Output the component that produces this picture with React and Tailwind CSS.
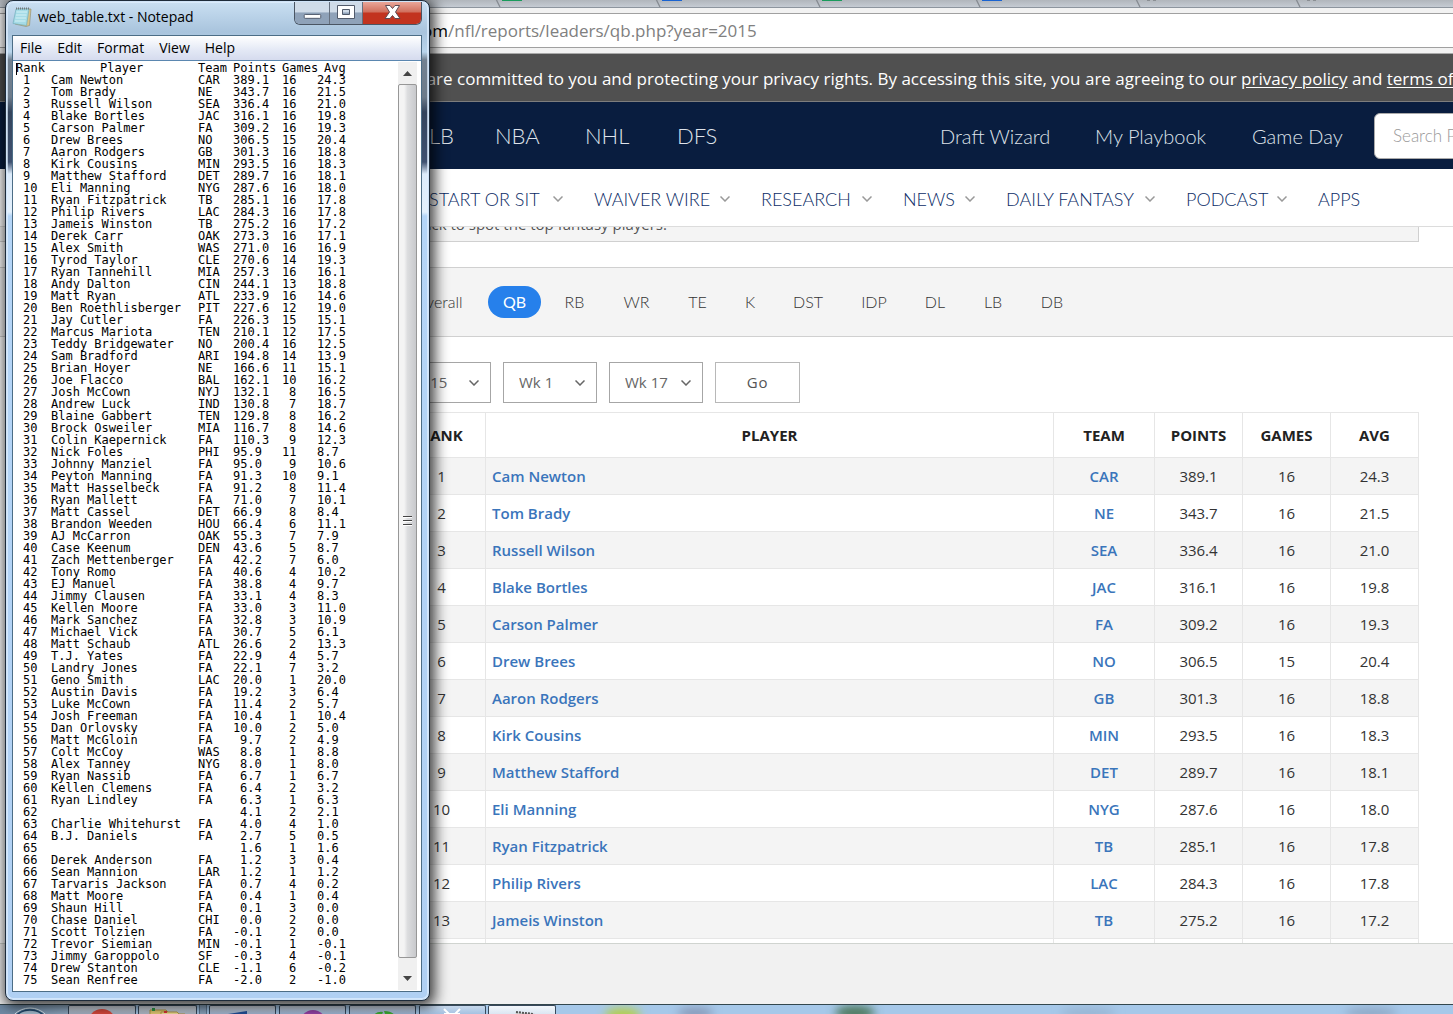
import React from "react";

const players = [
  ["1", "Cam Newton", "CAR", "389.1", "16", "24.3"],
  ["2", "Tom Brady", "NE", "343.7", "16", "21.5"],
  ["3", "Russell Wilson", "SEA", "336.4", "16", "21.0"],
  ["4", "Blake Bortles", "JAC", "316.1", "16", "19.8"],
  ["5", "Carson Palmer", "FA", "309.2", "16", "19.3"],
  ["6", "Drew Brees", "NO", "306.5", "15", "20.4"],
  ["7", "Aaron Rodgers", "GB", "301.3", "16", "18.8"],
  ["8", "Kirk Cousins", "MIN", "293.5", "16", "18.3"],
  ["9", "Matthew Stafford", "DET", "289.7", "16", "18.1"],
  ["10", "Eli Manning", "NYG", "287.6", "16", "18.0"],
  ["11", "Ryan Fitzpatrick", "TB", "285.1", "16", "17.8"],
  ["12", "Philip Rivers", "LAC", "284.3", "16", "17.8"],
  ["13", "Jameis Winston", "TB", "275.2", "16", "17.2"],
  ["14", "Derek Carr", "OAK", "273.3", "16", "17.1"],
  ["15", "Alex Smith", "WAS", "271.0", "16", "16.9"],
  ["16", "Tyrod Taylor", "CLE", "270.6", "14", "19.3"],
  ["17", "Ryan Tannehill", "MIA", "257.3", "16", "16.1"],
  ["18", "Andy Dalton", "CIN", "244.1", "13", "18.8"],
  ["19", "Matt Ryan", "ATL", "233.9", "16", "14.6"],
  ["20", "Ben Roethlisberger", "PIT", "227.6", "12", "19.0"],
  ["21", "Jay Cutler", "FA", "226.3", "15", "15.1"],
  ["22", "Marcus Mariota", "TEN", "210.1", "12", "17.5"],
  ["23", "Teddy Bridgewater", "NO", "200.4", "16", "12.5"],
  ["24", "Sam Bradford", "ARI", "194.8", "14", "13.9"],
  ["25", "Brian Hoyer", "NE", "166.6", "11", "15.1"],
  ["26", "Joe Flacco", "BAL", "162.1", "10", "16.2"],
  ["27", "Josh McCown", "NYJ", "132.1", "8", "16.5"],
  ["28", "Andrew Luck", "IND", "130.8", "7", "18.7"],
  ["29", "Blaine Gabbert", "TEN", "129.8", "8", "16.2"],
  ["30", "Brock Osweiler", "MIA", "116.7", "8", "14.6"],
  ["31", "Colin Kaepernick", "FA", "110.3", "9", "12.3"],
  ["32", "Nick Foles", "PHI", "95.9", "11", "8.7"],
  ["33", "Johnny Manziel", "FA", "95.0", "9", "10.6"],
  ["34", "Peyton Manning", "FA", "91.3", "10", "9.1"],
  ["35", "Matt Hasselbeck", "FA", "91.2", "8", "11.4"],
  ["36", "Ryan Mallett", "FA", "71.0", "7", "10.1"],
  ["37", "Matt Cassel", "DET", "66.9", "8", "8.4"],
  ["38", "Brandon Weeden", "HOU", "66.4", "6", "11.1"],
  ["39", "AJ McCarron", "OAK", "55.3", "7", "7.9"],
  ["40", "Case Keenum", "DEN", "43.6", "5", "8.7"],
  ["41", "Zach Mettenberger", "FA", "42.2", "7", "6.0"],
  ["42", "Tony Romo", "FA", "40.6", "4", "10.2"],
  ["43", "EJ Manuel", "FA", "38.8", "4", "9.7"],
  ["44", "Jimmy Clausen", "FA", "33.1", "4", "8.3"],
  ["45", "Kellen Moore", "FA", "33.0", "3", "11.0"],
  ["46", "Mark Sanchez", "FA", "32.8", "3", "10.9"],
  ["47", "Michael Vick", "FA", "30.7", "5", "6.1"],
  ["48", "Matt Schaub", "ATL", "26.6", "2", "13.3"],
  ["49", "T.J. Yates", "FA", "22.9", "4", "5.7"],
  ["50", "Landry Jones", "FA", "22.1", "7", "3.2"],
  ["51", "Geno Smith", "LAC", "20.0", "1", "20.0"],
  ["52", "Austin Davis", "FA", "19.2", "3", "6.4"],
  ["53", "Luke McCown", "FA", "11.4", "2", "5.7"],
  ["54", "Josh Freeman", "FA", "10.4", "1", "10.4"],
  ["55", "Dan Orlovsky", "FA", "10.0", "2", "5.0"],
  ["56", "Matt McGloin", "FA", "9.7", "2", "4.9"],
  ["57", "Colt McCoy", "WAS", "8.8", "1", "8.8"],
  ["58", "Alex Tanney", "NYG", "8.0", "1", "8.0"],
  ["59", "Ryan Nassib", "FA", "6.7", "1", "6.7"],
  ["60", "Kellen Clemens", "FA", "6.4", "2", "3.2"],
  ["61", "Ryan Lindley", "FA", "6.3", "1", "6.3"],
  ["62", "", "", "4.1", "2", "2.1"],
  ["63", "Charlie Whitehurst", "FA", "4.0", "4", "1.0"],
  ["64", "B.J. Daniels", "FA", "2.7", "5", "0.5"],
  ["65", "", "", "1.6", "1", "1.6"],
  ["66", "Derek Anderson", "FA", "1.2", "3", "0.4"],
  ["66", "Sean Mannion", "LAR", "1.2", "1", "1.2"],
  ["67", "Tarvaris Jackson", "FA", "0.7", "4", "0.2"],
  ["68", "Matt Moore", "FA", "0.4", "1", "0.4"],
  ["69", "Shaun Hill", "FA", "0.1", "3", "0.0"],
  ["70", "Chase Daniel", "CHI", "0.0", "2", "0.0"],
  ["71", "Scott Tolzien", "FA", "-0.1", "2", "0.0"],
  ["72", "Trevor Siemian", "MIN", "-0.1", "1", "-0.1"],
  ["73", "Jimmy Garoppolo", "SF", "-0.3", "4", "-0.1"],
  ["74", "Drew Stanton", "CLE", "-1.1", "6", "-0.2"],
  ["75", "Sean Renfree", "FA", "-2.0", "2", "-1.0"],
];

/* Tab stops stand every 7px; each cell is [stop number, text]. */
const TAB = 7;
const CHAR = 7.224;

function tabbedLine(cells) {
  let line = "";
  let x = 0;
  cells.forEach(([stop, text]) => {
    const target = stop * TAB;
    while (x < target) {
      let step = TAB - (x % TAB);
      if (step < CHAR / 2) step += TAB;
      x = Math.round(x + step);
      line += "\t";
    }
    line += text;
    x += text.length * CHAR;
  });
  return line;
}

const fileText = [
  tabbedLine([[0, "Rank"], [12, "Player"], [26, "Team"], [31, "Points"], [38, "Games"], [44, "Avg"]]),
  ...players.map(([rank, name, team, points, games, avg]) =>
    tabbedLine([
      [1, rank],
      [5, name],
      [26, team],
      [points.length === 3 ? 32 : 31, points],
      [games.length === 1 ? 39 : 38, games],
      [43, avg],
    ])
  ),
].join("\n");

function Chevron({ className }) {
  return (
    <svg viewBox="0 0 10 6" className={className} fill="none" stroke="currentColor" strokeWidth="1.5" aria-hidden="true">
      <path d="M0.5 0.5 L5 5 L9.5 0.5" />
    </svg>
  );
}

/* ---------- Browser ---------- */

const browserTabs = ["#1a9b5c", "#1a63d0", "#1a9b5c", "#1a63d0", null, null];

function TabStrip() {
  return (
    <div className="flex h-2 shrink-0 overflow-hidden border-b border-[#8d959e] bg-linear-to-b from-[#b1b6bc] to-[#c5cbd3] pl-[495px]">
      {browserTabs.map((color, i) => (
        <svg key={i} viewBox="0 0 160 8" className="h-2 w-40 shrink-0" aria-hidden="true">
          <path d="M1 -1 L5 7" stroke="#868b92" strokeWidth="1.3" fill="none" />
          {color ? (
            <rect x="7" y="0" width="20" height="1" fill={color} />
          ) : (
            <path d="M12 0.5 h3 M18 0.5 h3" stroke="#8b8f94" />
          )}
        </svg>
      ))}
    </div>
  );
}

function AddressBar() {
  return (
    <div className="flex h-[46px] shrink-0 items-start border-b border-[#a9a9a9] bg-[#f2f2f2] pt-[5px]">
      <div className="flex h-[35px] w-full items-center whitespace-nowrap border-y border-[#a0a0a0] bg-white pl-[422px] font-['Open_Sans',sans-serif] text-[17px] text-[#808080]">
        <span className="text-black">om</span>/nfl/reports/leaders/qb.php?year=2015
      </div>
    </div>
  );
}

function PrivacyBar() {
  return (
    <div className="flex h-12 shrink-0 items-center overflow-hidden whitespace-nowrap border-b border-[#7d7d7d] bg-[#505050] pl-[397px] pt-0.5 font-['Open_Sans',sans-serif] text-[17px] font-medium text-white">
      <p>
        We are committed to you and protecting your privacy rights. By accessing this site, you are agreeing to our{" "}
        <a href="#privacy" className="underline underline-offset-2">privacy policy</a> and{" "}
        <a href="#terms" className="underline underline-offset-2">terms of&nbsp;</a>
      </p>
    </div>
  );
}

function SiteHeader() {
  return (
    <header className="flex h-[67px] shrink-0 items-center justify-between overflow-hidden whitespace-nowrap bg-[#091d3f] pl-[409px] font-['Lato',sans-serif] font-light text-[#dfe3ea]">
      <nav className="flex text-[22px]">
        <a href="#mlb" className="w-[86px]">MLB</a>
        <a href="#nba" className="w-[90px]">NBA</a>
        <a href="#nhl" className="w-[92px]">NHL</a>
        <a href="#dfs">DFS</a>
      </nav>
      <div className="-mr-32 flex items-center text-xl">
        <a href="#draft" className="w-[155px]">Draft Wizard</a>
        <a href="#playbook" className="w-[157px]">My Playbook</a>
        <a href="#gameday" className="w-[122px]">Game Day</a>
        <input
          aria-label="Search players"
          placeholder="Search Players"
          className="h-[46px] w-[207px] rounded-md border border-[#aaa] bg-white px-[18px] text-[17px] text-gray-800 placeholder:text-[#999]"
        />
      </div>
    </header>
  );
}

const menus = [
  ["START OR SIT", "w-[165px]"],
  ["WAIVER WIRE", "w-[167px]"],
  ["RESEARCH", "w-[142px]"],
  ["NEWS", "w-[103px]"],
  ["DAILY FANTASY", "w-[180px]"],
  ["PODCAST", "w-[132px]"],
  ["APPS", ""],
];

function SiteMenu() {
  return (
    <nav className="flex h-[58px] shrink-0 items-center overflow-hidden whitespace-nowrap border-b border-[#dcdcdc] bg-white pl-[429px] pt-0.5 font-['Lato',sans-serif] text-lg font-light text-[#0b2c66]">
      {menus.map(([label, width]) => (
        <div key={label} className={width}>
          <a href="#menu" className="flex items-center justify-between pr-[31px]">
            {label}
            {width && <Chevron className="h-1.5 w-2.5 text-[#999]" />}
          </a>
        </div>
      ))}
    </nav>
  );
}

const positions = [
  ["Overall", "w-[84px]"],
  ["QB", "w-[53px]"],
  ["RB", "w-[51px]"],
  ["WR", "w-[57px]"],
  ["TE", "w-[49px]"],
  ["K", "w-[40px]"],
  ["DST", "w-[60px]"],
  ["IDP", "w-[56px]"],
  ["DL", "w-[50px]"],
  ["LB", "w-[50px]"],
  ["DB", "w-[52px]"],
];

function PositionTabs() {
  return (
    <div className="flex h-[70px] shrink-0 items-center gap-2 border-y border-[#d0d0d0] bg-[#f4f4f4] pl-[396px] font-['Lato',sans-serif] text-base font-light text-[#333]">
      {positions.map(([label, width]) => (
        <button
          key={label}
          className={`h-8 shrink-0 rounded-full ${width} ${label === "QB" ? "bg-[#2680eb] font-normal text-white" : ""}`}
        >
          {label}
        </button>
      ))}
    </div>
  );
}

function Picker({ label, value }) {
  return (
    <div className="relative">
      <select
        aria-label={label}
        defaultValue={value}
        className="h-[41px] w-[94px] appearance-none border border-[#a6a6a6] bg-white pl-[15px] text-[15px] text-[#666]"
      >
        <option>{value}</option>
      </select>
      <Chevron className="pointer-events-none absolute right-3 top-[18px] h-1.5 w-2.5 text-[#666]" />
    </div>
  );
}

function Leaders() {
  return (
    <div className="shrink-0 pl-[397px] pr-[34px] font-['Open_Sans',sans-serif] text-[15px]">
      <div className="flex gap-3 pb-[9px] pt-[25px]">
        <Picker label="Year" value="2015" />
        <Picker label="From week" value="Wk 1" />
        <Picker label="To week" value="Wk 17" />
        <button className="h-[41px] w-[85px] border border-[#b8b8b8] bg-white tracking-wider text-[#555]">Go</button>
      </div>
      <table className="w-full table-fixed border-collapse text-center text-[#333]">
        <thead>
          <tr className="h-[45px] text-[#222]">
            <th className="w-[88px] border border-[#e6e6e6]">RANK</th>
            <th className="border border-[#e6e6e6]">PLAYER</th>
            <th className="w-[101px] border border-[#e6e6e6]">TEAM</th>
            <th className="w-[88px] border border-[#e6e6e6]">POINTS</th>
            <th className="w-[88px] border border-[#e6e6e6]">GAMES</th>
            <th className="w-[88px] border border-[#e6e6e6]">AVG</th>
          </tr>
        </thead>
        <tbody>
          {players.slice(0, 14).map(([rank, name, team, points, games, avg]) => (
            <tr key={rank} className="h-[37px] odd:bg-[#f4f4f4]">
              <td className="border border-[#e6e6e6]">{rank}</td>
              <td className="border border-[#e6e6e6] pl-1.5 text-left font-semibold text-[#3a75bb]">
                <a href="#player">{name}</a>
              </td>
              <td className="border border-[#e6e6e6] font-semibold text-[#3a75bb]">
                <a href="#team">{team}</a>
              </td>
              <td className="border border-[#e6e6e6]">{points}</td>
              <td className="border border-[#e6e6e6]">{games}</td>
              <td className="border border-[#e6e6e6]">{avg}</td>
            </tr>
          ))}
        </tbody>
      </table>
    </div>
  );
}

function Browser() {
  return (
    <div className="flex min-h-0 flex-1 flex-col bg-[#f1f1f1]">
      <TabStrip />
      <AddressBar />
      <main className="flex min-h-0 flex-1 flex-col overflow-hidden border-b border-[#d0d4d0] bg-white">
        <PrivacyBar />
        <SiteHeader />
        <SiteMenu />
        <div className="mr-[34px] flex h-[15px] shrink-0 items-end overflow-hidden border-b border-r border-[#d0d0d0] bg-[#f4f4f4] pl-[368px] font-['Open_Sans',sans-serif] text-[15px] text-[#555]">
          <p className="pb-1.5">Check back to spot the top fantasy players.</p>
        </div>
        <div className="h-[25px] shrink-0" />
        <PositionTabs />
        <Leaders />
      </main>
      <div className="h-[60px] shrink-0" />
    </div>
  );
}

/* ---------- Taskbar ---------- */

const taskIcons = {
  chrome: <circle cx="33" cy="17" r="14" fill="#dd4b3e" />,
  explorer: (
    <g>
      <path d="M11 4 h16 l2 2 v5 h-18z" fill="#e8cf76" stroke="#b79b45" />
      <path d="M22 6 h16 l2 2 h6 v4 h-24z" fill="#f4e29a" stroke="#b79b45" />
      <path d="M13 2 h3 v3 h-3z" fill="#2e9b46" />
      <path d="M25 5 h3 v2 h-3z" fill="#d33" />
    </g>
  ),
  word: <path d="M14 11 L18 8 L37 5 V11z" fill="#22509b" />,
  purple: <circle cx="33" cy="17" r="13" fill="#9a44ab" />,
  green: <path d="M22 11 Q26 5 33 6 L31 11z M34 5 Q43 5 46 11 H36z" fill="#3cb034" />,
  game: <path d="M24 3 L29 8 M40 3 L35 8 M25 11 V8 H39 V11" stroke="#fff" strokeWidth="2" fill="none" />,
  notepad: (
    <g>
      <path d="M27 6 L45 8 L46 11 H26z" fill="#cfd3d0" />
      <path d="M27 6 L45 8" stroke="#555" strokeWidth="2" strokeDasharray="2 1" />
    </g>
  ),
};

function TaskButton({ icon, className }) {
  return (
    <button
      aria-label={icon}
      className={`h-full shrink-0 overflow-hidden rounded-t-xs border-x border-t border-[#38495c] ${className}`}
    >
      <svg viewBox="0 0 66 10" className="h-2.5 w-[66px]" aria-hidden="true">
        {taskIcons[icon]}
      </svg>
    </button>
  );
}

function Taskbar() {
  return (
    <footer className="flex h-2.5 shrink-0 items-end overflow-hidden border-t border-[#33474d] bg-[#a6c8e9]">
      <div className="h-full w-[68px] shrink-0 bg-linear-to-r from-[#6f8aa5] to-[#91abc4]">
        <svg viewBox="0 0 68 9" className="h-full w-full" aria-hidden="true">
          <circle cx="30" cy="25" r="22" fill="#5c7f9f" stroke="#e4f3fb" strokeWidth="1" />
          <circle cx="30" cy="25" r="20" fill="#a9c3d6" stroke="#20496e" strokeWidth="1.5" />
        </svg>
      </div>
      <TaskButton icon="chrome" className="w-[68px] bg-linear-to-b from-[#d7dde5] to-[#a6b4c6]" />
      <TaskButton icon="explorer" className="ml-0.5 w-[59px] bg-linear-to-b from-[#d9dee6] to-[#b0bccb]" />
      <div className="ml-0.5 h-full w-2 border-x border-[#5f7892] bg-[#8ba6c1]" />
      <TaskButton icon="word" className="ml-0.5 w-[67px] bg-linear-to-b from-[#d7dde5] to-[#a3b8d4]" />
      <TaskButton icon="purple" className="ml-[3px] w-[67px] bg-linear-to-b from-[#d3dce8] to-[#9fb8d8]" />
      <TaskButton icon="green" className="ml-[3px] w-[67px] bg-linear-to-b from-[#d3dce8] to-[#9fb8d8]" />
      <TaskButton icon="game" className="ml-[3px] w-[67px] bg-linear-to-b from-[#c7d9ec] to-[#a5c2e2]" />
      <TaskButton icon="notepad" className="ml-0.5 w-[68px] bg-linear-to-b from-[#f3f7fb] to-[#dbe6f2]" />
      <svg viewBox="0 0 900 10" preserveAspectRatio="xMinYMin slice" className="h-full min-w-0 flex-1" aria-hidden="true">
        <defs>
          <filter id="glass" x="-50%" y="-100%" width="200%" height="300%">
            <feGaussianBlur stdDeviation="5" />
          </filter>
        </defs>
        <g filter="url(#glass)">
          <ellipse cx="67" cy="10" rx="18" ry="7" fill="#b5cf45" />
          <ellipse cx="140" cy="8" rx="18" ry="6" fill="#8799b8" />
          <ellipse cx="300" cy="8" rx="20" ry="8" fill="#4f7a60" />
          <ellipse cx="534" cy="8" rx="28" ry="6" fill="#98b5d3" />
          <ellipse cx="818" cy="8" rx="26" ry="6" fill="#8fa9c6" />
        </g>
      </svg>
    </footer>
  );
}

/* ---------- Notepad ---------- */

function NotepadIcon() {
  return (
    <svg viewBox="0 0 20 22" className="h-[22px] w-5" aria-hidden="true">
      <path d="M5 3 L19 3 L17.500 19.500 L14 20.500 L3 18z" fill="#d8c48c" stroke="#8b8a70" strokeWidth="0.600" />
      <path d="M4 3 L17 3 L14.500 19.500 L1 17.500z" fill="#a5dbe6" stroke="#6aa7b6" strokeWidth="0.600" />
      <path d="M4.500 6 H15 M4 9 H14.500 M3.500 12 H14 M3 15 H13.500" stroke="#d4f1f5" strokeWidth="1" />
      <path d="M4 2.500 H18" stroke="#70787c" strokeWidth="2" strokeDasharray="1 1" />
    </svg>
  );
}

function CaptionButtons() {
  return (
    <div className="flex h-[23px] overflow-hidden rounded-b-md border-x border-b border-[#4a5563]">
      <button aria-label="Minimize" className="w-[35px] border-r border-[#66707e] bg-linear-to-b from-[#cfdbe8] from-45% to-[#8fa2b9] to-50%">
        <svg viewBox="0 0 35 22" className="h-full w-full" aria-hidden="true">
          <rect x="9.500" y="12.500" width="17" height="4" rx="1" fill="#fff" stroke="#515a6b" />
        </svg>
      </button>
      <button aria-label="Maximize" className="w-[33px] border-r border-[#66707e] bg-linear-to-b from-[#cfdbe8] from-45% to-[#8fa2b9] to-50%">
        <svg viewBox="0 0 32 22" className="h-full w-full" aria-hidden="true">
          <path d="M7.500 3.500 H24.500 V16.500 H7.500z M12.500 7.500 V12.500 H19.500 V7.500z" fill="#fff" fillRule="evenodd" stroke="#515a6b" />
        </svg>
      </button>
      <button aria-label="Close" className="w-[58px] bg-linear-to-b from-[#e9a699] from-0% via-[#d0705e] via-45% to-[#c2331f] to-50%">
        <svg viewBox="0 0 58 22" className="h-full w-full" aria-hidden="true">
          <path
            d="M22.500 3.500 H27 L29.500 6.500 L32 3.500 H36.500 L32.500 10 L37 16.500 H32 L29.500 13.500 L27 16.500 H22 L26.500 10z"
            fill="#fff"
            stroke="#5b4c55"
          />
        </svg>
      </button>
    </div>
  );
}

function ScrollBar() {
  return (
    <div className="flex w-[19px] shrink-0 flex-col bg-[#f0f0f0]" aria-hidden="true">
      <div className="flex h-[22px] items-center justify-center">
        <svg viewBox="0 0 9 5" className="h-[5px] w-[9px]"><path d="M0 5 L4.500 0 L9 5z" fill="#444" /></svg>
      </div>
      <div className="flex flex-1 items-center justify-center rounded-xs border border-[#979797] bg-linear-to-r from-[#f4f4f4] from-30% via-[#dcdddf] via-50% to-[#c8c9cc]">
        <div className="flex w-[9px] flex-col gap-0.5">
          {[0, 1, 2].map((i) => (
            <span key={i} className="h-0.5 border-t border-[#444] bg-white" />
          ))}
        </div>
      </div>
      <div className="flex h-8 items-start justify-center pt-[18px]">
        <svg viewBox="0 0 9 5" className="h-[5px] w-[9px]"><path d="M0 0 L4.500 5 L9 0z" fill="#444" /></svg>
      </div>
    </div>
  );
}

function Notepad() {
  return (
    <section className="absolute bottom-[13px] left-[5px] top-0 flex w-[425px] flex-col rounded-lg border border-[#1d2b3a] bg-[#cfe3f7] p-px shadow-[2px_3px_14px_3px_rgba(0,0,0,0.75)]">
      <div className="flex min-h-0 flex-1 flex-col rounded-md bg-[linear-gradient(to_bottom,#c9dff2_0px,#a9c4dd_30px,#b9d5ec_50px,#728191_58px,#6d7b8a_95px,#34445c_110px,#3f5170_160px,#dcebfa_172px,#e3f0fc_210px,#b4d5f7_214px,#b0d0f3_100%)] pb-[7px] pl-[5px] pr-1.5 shadow-[inset_0_0_0_1px_rgba(225,240,255,0.7)]">
        <div className="flex h-[33px] shrink-0 items-start">
          <div className="flex flex-1 items-center gap-1.5 pt-1 font-['Open_Sans',sans-serif] text-sm text-black">
            <NotepadIcon />
            <h1>web_table.txt - Notepad</h1>
          </div>
          <CaptionButtons />
        </div>
        <div className="flex min-h-0 flex-1 flex-col border border-[#4c6d86] bg-white">
          <nav className="flex h-[25px] shrink-0 items-center gap-[15px] border-b border-[#5b87b0] bg-linear-to-b from-white via-[#e3e8f5] via-60% to-[#d5dbee] pl-[7px] font-['Open_Sans',sans-serif] text-sm text-black">
            <button>File</button>
            <button>Edit</button>
            <button>Format</button>
            <button>View</button>
            <button>Help</button>
          </nav>
          <div className="relative flex min-h-0 flex-1 py-px pl-[3px] pr-1">
            <textarea
              aria-label="web_table.txt"
              defaultValue={fileText}
              spellCheck={false}
              wrap="off"
              className="min-w-0 flex-1 resize-none overflow-hidden bg-white font-['DejaVu_Sans_Mono',monospace] text-xs leading-3 text-black outline-none [tab-size:7px]"
            />
            <span className="absolute left-[3px] top-0.5 h-3 w-px bg-black" aria-hidden="true" />
            <ScrollBar />
          </div>
        </div>
      </div>
    </section>
  );
}

export default function App() {
  return (
    <div className="relative flex h-screen flex-col overflow-hidden">
      <Browser />
      <Taskbar />
      <Notepad />
    </div>
  );
}
